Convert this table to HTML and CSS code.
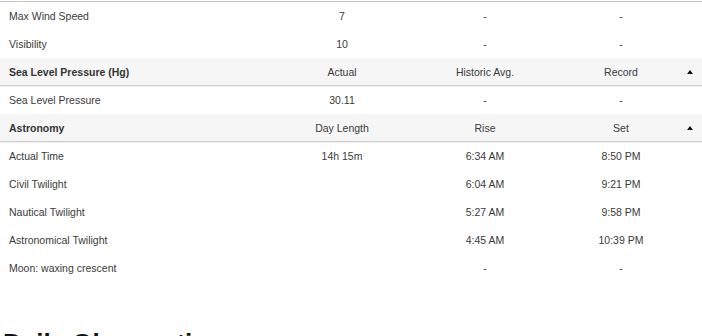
FILE: index.html
```html
<!DOCTYPE html>
<html>
<head>
<meta charset="utf-8">
<link rel="stylesheet" href="styles.css">
</head>
<body>
<div class="table">
  <div class="row"><div class="lbl">Max Wind Speed</div><div class="c">7</div><div class="c">-</div><div class="c">-</div><div></div></div>
  <div class="row"><div class="lbl">Visibility</div><div class="c">10</div><div class="c">-</div><div class="c">-</div><div></div></div>
  <div class="row head"><div class="lbl">Sea Level Pressure (Hg)</div><div class="c">Actual</div><div class="c">Historic Avg.</div><div class="c">Record</div><div class="arrow"><span class="tri"></span></div></div>
  <div class="row"><div class="lbl">Sea Level Pressure</div><div class="c">30.11</div><div class="c">-</div><div class="c">-</div><div></div></div>
  <div class="row head"><div class="lbl">Astronomy</div><div class="c">Day Length</div><div class="c">Rise</div><div class="c">Set</div><div class="arrow"><span class="tri"></span></div></div>
  <div class="row"><div class="lbl">Actual Time</div><div class="c">14h 15m</div><div class="c">6:34 AM</div><div class="c">8:50 PM</div><div></div></div>
  <div class="row"><div class="lbl">Civil Twilight</div><div class="c"></div><div class="c">6:04 AM</div><div class="c">9:21 PM</div><div></div></div>
  <div class="row"><div class="lbl">Nautical Twilight</div><div class="c"></div><div class="c">5:27 AM</div><div class="c">9:58 PM</div><div></div></div>
  <div class="row"><div class="lbl">Astronomical Twilight</div><div class="c"></div><div class="c">4:45 AM</div><div class="c">10:39 PM</div><div></div></div>
  <div class="row"><div class="lbl">Moon: waxing crescent</div><div class="c"></div><div class="c">-</div><div class="c">-</div><div></div></div>
</div>
<h2 class="title">Daily Observations</h2>
</body>
</html>
```
FILE: styles.css
```css
html, body {
  margin: 0;
  padding: 0;
  background: #fff;
}
body {
  font-family: "Liberation Sans", Arial, sans-serif;
  color: #3a3a3a;
  font-size: 10.5px;
}
.table {
  margin-top: 1px;
  border-top: 1px solid #c4c4c4;
}
.row {
  display: grid;
  grid-template-columns: 270px 144px 142px 130px 16px;
  height: 28px;
  align-items: center;
}
.lbl {
  padding-left: 9px;
  white-space: nowrap;
}
.c {
  text-align: center;
  white-space: nowrap;
}
.head {
  background: #f6f6f6;
  height: 27px;
  border-bottom: 1px solid #cfcfcf;
  box-shadow: 0 1px 1px rgba(0,0,0,0.06);
}
.head .lbl {
  font-weight: bold;
  color: #333;
}
.arrow {
  display: flex;
  justify-content: flex-start;
  align-items: center;
}
.tri {
  display: block;
  width: 0;
  height: 0;
  border-left: 3px solid transparent;
  border-right: 3px solid transparent;
  border-bottom: 4px solid #111;
  margin-left: 1px;
}
.title {
  margin: 46px 0 0 3px;
  font-size: 26px;
  font-weight: bold;
  color: #111;
  line-height: 30px;
}
```
